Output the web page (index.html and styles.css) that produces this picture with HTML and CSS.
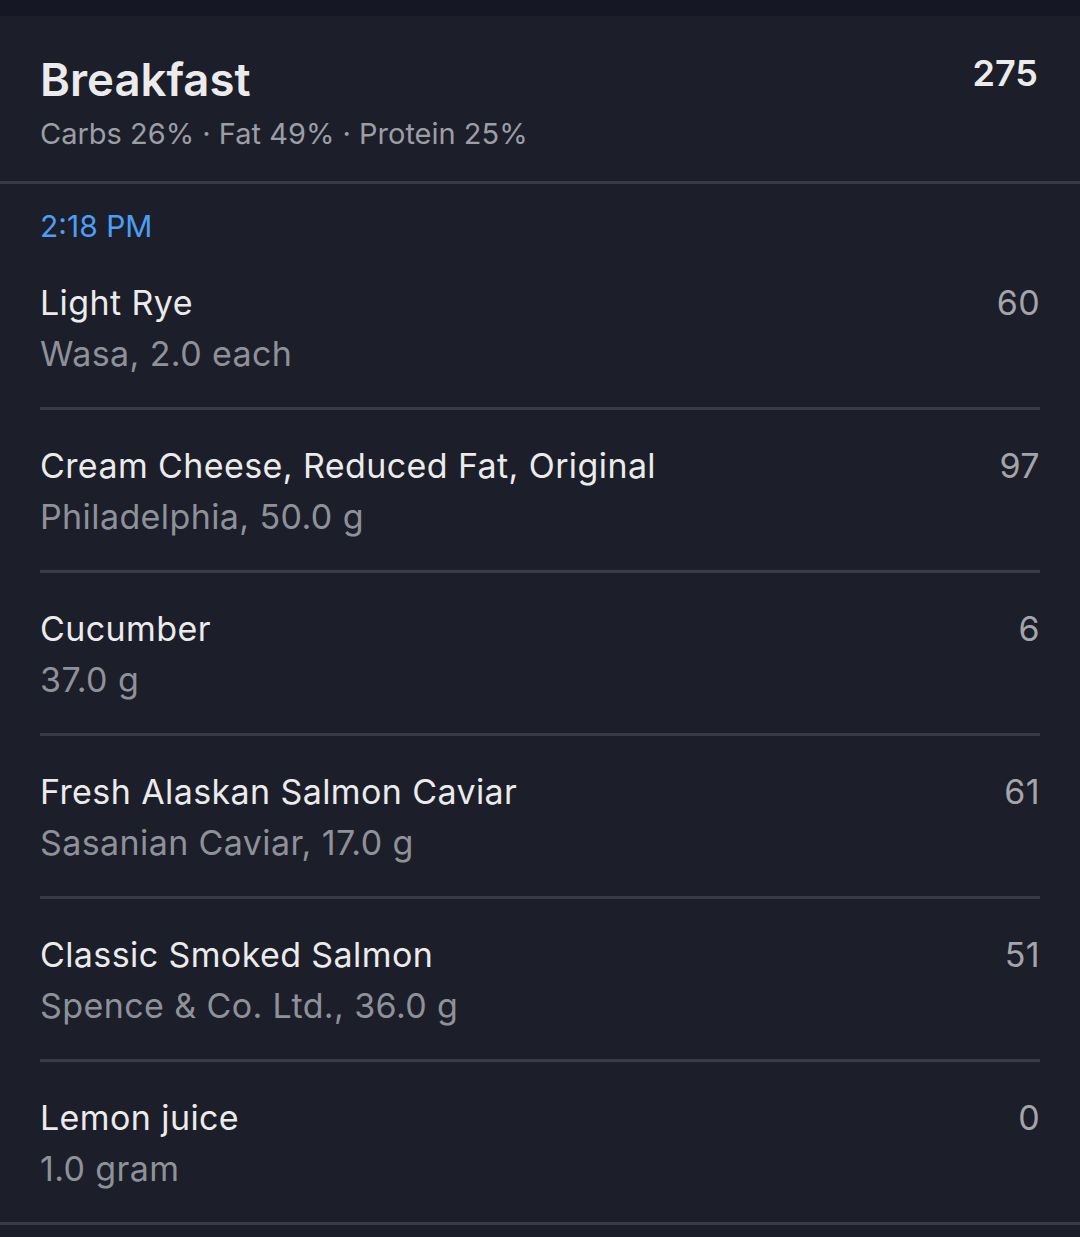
FILE: index.html
```html
<!DOCTYPE html>
<html>
<head>
<meta charset="utf-8">
<link rel="stylesheet" href="styles.css">
</head>
<body>
<div class="topbar"></div>
<div class="card">
  <header class="header">
    <div class="header-text">
      <div class="title">Breakfast</div>
      <div class="macros">Carbs 26% · Fat 49% · Protein 25%</div>
    </div>
    <div class="total">275</div>
  </header>
  <section class="entries">
    <div class="time">2:18 PM</div>
    <div class="row">
      <div class="info"><div class="name">Light Rye</div><div class="sub">Wasa, 2.0 each</div></div>
      <div class="cal">60</div>
    </div>
    <div class="row">
      <div class="info"><div class="name">Cream Cheese, Reduced Fat, Original</div><div class="sub">Philadelphia, 50.0 g</div></div>
      <div class="cal">97</div>
    </div>
    <div class="row">
      <div class="info"><div class="name">Cucumber</div><div class="sub">37.0 g</div></div>
      <div class="cal">6</div>
    </div>
    <div class="row">
      <div class="info"><div class="name">Fresh Alaskan Salmon Caviar</div><div class="sub">Sasanian Caviar, 17.0 g</div></div>
      <div class="cal">61</div>
    </div>
    <div class="row">
      <div class="info"><div class="name">Classic Smoked Salmon</div><div class="sub">Spence &amp; Co. Ltd., 36.0 g</div></div>
      <div class="cal">51</div>
    </div>
    <div class="row last">
      <div class="info"><div class="name">Lemon juice</div><div class="sub">1.0 gram</div></div>
      <div class="cal">0</div>
    </div>
  </section>
  <div class="bottom-rule"></div>
</div>
</body>
</html>
```
FILE: styles.css
```css
* { box-sizing: border-box; }
html, body { margin: 0; padding: 0; }
body {
  background: #1c1e2a;
  font-family: Inter, "Noto Sans", sans-serif;
  width: 1080px;
  height: 1237px;
  overflow: hidden;
}
.topbar { height: 16px; background: #151724; }
.header {
  display: flex;
  justify-content: space-between;
  align-items: flex-start;
  padding: 36px 42px 27px 40px;
  border-bottom: 3px solid #393b46;
}
.title {
  font-size: 45.5px;
  line-height: 56px;
  font-weight: 600;
  color: #ebebeb;
}
.macros {
  margin-top: 6px;
  font-size: 29px;
  line-height: 40px;
  color: #9c9ea5;
}
.total {
  margin-top: -1px;
  font-size: 36px;
  line-height: 45px;
  font-weight: 600;
  color: #ebebeb;
}
.entries { padding: 21px 40px 0 40px; }
.time {
  font-size: 30px;
  line-height: 42px;
  color: #4c9ef5;
}
.row {
  display: flex;
  justify-content: space-between;
  align-items: flex-start;
  padding: 30px 0 28px;
  border-bottom: 3px solid #393b46;
}
.row.last { border-bottom: none; }
.name, .sub, .cal { font-size: 34px; line-height: 51px; letter-spacing: 0.4px; }
.name { color: #ebebeb; }
.sub { color: #8f9199; }
.cal { color: #a3a5ab; }
.bottom-rule { height: 3px; background: #393b46; }
```
